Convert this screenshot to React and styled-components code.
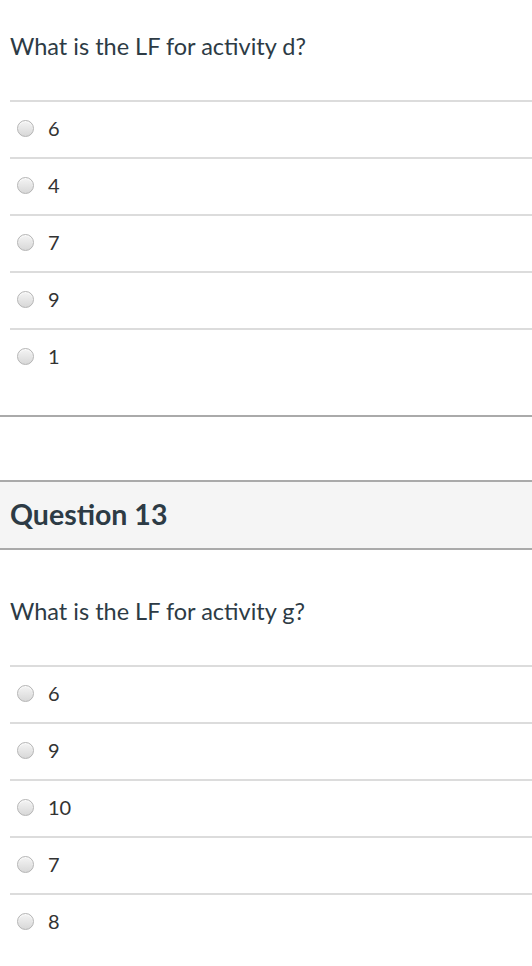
import styled, { createGlobalStyle } from "styled-components";

const GlobalStyle = createGlobalStyle`
  html, body {
    margin: 0;
    padding: 0;
    background: #fff;
  }
  body {
    font-family: Lato, "Open Sans", sans-serif;
    color: #2d3b45;
  }
`;

const Page = styled.div`
  width: 532px;
  display: flex;
  flex-direction: column;
`;

const QuestionBlock = styled.section`
  border-bottom: ${(p) => (p.$last ? "none" : "2px solid #aaa")};
  padding-bottom: ${(p) => (p.$last ? "0" : "30px")};
`;

const QuestionText = styled.p`
  margin: 0;
  padding: ${(p) => (p.$first ? "30px" : "45px")} 0 38px 10px;
  font-size: 23.5px;
  line-height: 32px;
  color: #2d3b45;
`;

const AnswerList = styled.div`
  display: flex;
  flex-direction: column;
  margin-left: 10px;
`;

const AnswerRow = styled.label`
  display: flex;
  align-items: center;
  gap: 14px;
  box-sizing: border-box;
  height: 57px;
  padding: 0 0 3px 7px;
  border-top: 2px solid #dcdcdc;
  font-size: 20px;
  color: #333;
`;

const Radio = styled.span`
  width: 17px;
  height: 17px;
  box-sizing: border-box;
  border-radius: 50%;
  border: 1px solid #b4b4b4;
  background: linear-gradient(#f4f4f4, #d8d8d8);
  box-shadow: inset 0 1px 1px rgba(255, 255, 255, 0.8);
  flex-shrink: 0;
  margin-top: 1px;
`;

const Spacer = styled.div`
  height: 63px;
`;

const Header = styled.div`
  display: flex;
  align-items: center;
  box-sizing: border-box;
  height: 70px;
  padding: 0 0 2px 10px;
  background: #f5f5f5;
  border-top: 2px solid #aaa;
  border-bottom: 2px solid #aaa;
`;

const HeaderTitle = styled.h2`
  margin: 0;
  font-size: 28.5px;
  font-weight: 700;
  color: #2d3b45;
`;

const questions = [
  { text: "What is the LF for activity d?", answers: ["6", "4", "7", "9", "1"] },
  { title: "Question 13", text: "What is the LF for activity g?", answers: ["6", "9", "10", "7", "8"] },
];

export default function App() {
  return (
    <>
      <GlobalStyle />
      <Page>
        <QuestionBlock>
          <QuestionText $first>{questions[0].text}</QuestionText>
          <AnswerList>
            {questions[0].answers.map((a, i) => (
              <AnswerRow key={i}>
                <Radio />
                {a}
              </AnswerRow>
            ))}
          </AnswerList>
        </QuestionBlock>
        <Spacer />
        <Header>
          <HeaderTitle>{questions[1].title}</HeaderTitle>
        </Header>
        <QuestionBlock $last>
          <QuestionText>{questions[1].text}</QuestionText>
          <AnswerList>
            {questions[1].answers.map((a, i) => (
              <AnswerRow key={i}>
                <Radio />
                {a}
              </AnswerRow>
            ))}
          </AnswerList>
        </QuestionBlock>
      </Page>
    </>
  );
}
